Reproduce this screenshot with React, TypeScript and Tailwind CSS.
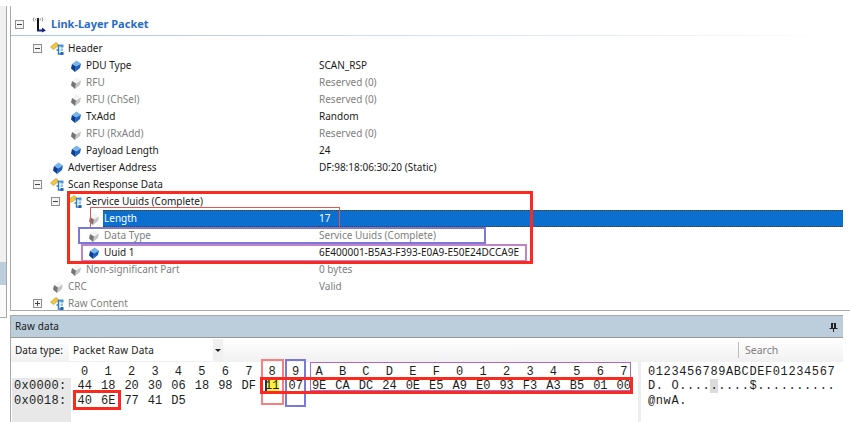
const FONT = "font-['Noto_Sans','Liberation_Sans',sans-serif]";
const MONO = "font-['Liberation_Mono','DejaVu_Sans_Mono',monospace]";

function Cube({ on = true }: { on?: boolean }) {
  const a = on ? "#79b6ec" : "#f4f4f4";
  const b = on ? "#1a62c0" : "#c4c4c4";
  const c = on ? "#0b3d94" : "#757575";
  return (
    <svg width="10" height="12" viewBox="0 0 10 12" className="shrink-0">
      <path d="M5.5 0.5 L10 3.5 L5 6.5 L1 4 Z" fill={a} />
      <path d="M10 3.5 L9 8 L4 12 L5 6.5 Z" fill={b} />
      <path d="M1 4 L5 6.5 L4 12 L0 8.5 Z" fill={c} />
    </svg>
  );
}

function Struct() {
  return (
    <svg width="15" height="14" viewBox="0 0 15 14" className="shrink-0">
      <path d="M0.5 5 L6 0.5 L9 3 L3.5 7.5 Z" fill="#f4c63a" stroke="#b98a1e" strokeWidth="0.6" />
      <path d="M11 3.5 H8.5 V8 H6.5 M8.5 8 V12 H11" fill="none" stroke="#2f7fc8" strokeWidth="1.5" />
      <rect x="10.5" y="2.5" width="3" height="3" fill="#4a94d8" />
      <rect x="10.5" y="10" width="3" height="3" fill="#1f66b0" />
      <rect x="10.5" y="6.5" width="2.5" height="2.5" fill="#8cc0ea" />
    </svg>
  );
}

function Antenna() {
  return (
    <svg width="16" height="17" viewBox="0 0 16 17" className="shrink-0">
      <path d="M3 1.5 Q1.5 3.5 3 5.5 M11 1.5 Q12.5 3.5 11 5.5 M5 2.5 Q4.2 3.5 5 4.5 M9 2.5 Q9.8 3.5 9 4.5" fill="none" stroke="#666" strokeWidth="0.8" />
      <rect x="6" y="2" width="2" height="2" fill="#222" />
      <path d="M7 4 V14" stroke="#111" strokeWidth="2" />
      <path d="M6 14.5 H12" stroke="#16267c" strokeWidth="2" />
      <path d="M11 11.5 L15 14.5 L11 16.5 Z" fill="#16267c" />
    </svg>
  );
}

function Box({ plus = false }: { plus?: boolean }) {
  return (
    <span className="flex h-[9px] w-[9px] shrink-0 items-center justify-center border border-[#8f8f8f] bg-[#f4f4f4]">
      <span className="relative block h-px w-[5px] bg-[#444]">
        {plus && <span className="absolute left-[2px] top-[-2px] block h-[5px] w-px bg-[#444]" />}
      </span>
    </span>
  );
}

type R = {
  pl: string; name: string; value?: string; kind: "on" | "off" | "struct";
  gray?: boolean; plus?: boolean; selected?: boolean;
};

const rows: R[] = [
  { pl: "pl-[22px]", name: "Header", kind: "struct" },
  { pl: "pl-[60px]", name: "PDU Type", value: "SCAN_RSP", kind: "on" },
  { pl: "pl-[60px]", name: "RFU", value: "Reserved (0)", kind: "off", gray: true },
  { pl: "pl-[60px]", name: "RFU (ChSel)", value: "Reserved (0)", kind: "off", gray: true },
  { pl: "pl-[60px]", name: "TxAdd", value: "Random", kind: "on" },
  { pl: "pl-[60px]", name: "RFU (RxAdd)", value: "Reserved (0)", kind: "off", gray: true },
  { pl: "pl-[60px]", name: "Payload Length", value: "24", kind: "on" },
  { pl: "pl-[42px]", name: "Advertiser Address", value: "DF:98:18:06:30:20 (Static)", kind: "on" },
  { pl: "pl-[22px]", name: "Scan Response Data", kind: "struct" },
  { pl: "pl-[40px]", name: "Service Uuids (Complete)", kind: "struct" },
  { pl: "pl-[78px]", name: "Length", value: "17", kind: "off", selected: true },
  { pl: "pl-[78px]", name: "Data Type", value: "Service Uuids (Complete)", kind: "off", gray: true },
  { pl: "pl-[78px]", name: "Uuid 1", value: "6E400001-B5A3-F393-E0A9-E50E24DCCA9E", kind: "on" },
  { pl: "pl-[60px]", name: "Non-significant Part", value: "0 bytes", kind: "off", gray: true },
  { pl: "pl-[42px]", name: "CRC", value: "Valid", kind: "off", gray: true },
  { pl: "pl-[22px]", name: "Raw Content", kind: "struct", gray: true, plus: true },
];

function TreeRow({ r }: { r: R }) {
  const color = r.gray ? "text-[#808080]" : "text-[#1a1a1a]";
  const isStruct = r.kind === "struct";
  return (
    <div className="grid h-[17px] grid-cols-[308px_1fr] items-center text-[10px] leading-[17px]">
      <div className={`flex h-[17px] items-center ${r.pl}`}>
        {isStruct && <Box plus={r.plus} />}
        <span className={isStruct ? "ml-[8px]" : ""}>
          {isStruct ? <Struct /> : <Cube on={r.kind === "on"} />}
        </span>
        {r.selected ? (
          <span className="ml-[4px] h-[17px] flex-1 border-y border-dotted border-[#5b3a12] bg-[#0a6fcf] pl-px leading-[15px] text-white">
            {r.name}
          </span>
        ) : (
          <span className={`${isStruct ? "ml-[3px]" : "ml-[5px]"} ${color}`}>{r.name}</span>
        )}
      </div>
      {r.selected ? (
        <div className="h-[17px] border-y border-dotted border-[#5b3a12] bg-[#0a6fcf] leading-[15px] text-white">{r.value}</div>
      ) : (
        <div className={r.gray ? "text-[#808080]" : "text-[#1a1a1a]"}>{r.value}</div>
      )}
    </div>
  );
}

const heads = "0 1 2 3 4 5 6 7 8 9 A B C D E F 0 1 2 3 4 5 6 7".split(" ");
const line1 = "44 18 20 30 06 18 98 DF 11 07 9E CA DC 24 0E E5 A9 E0 93 F3 A3 B5 01 00".split(" ");
const line2 = "40 6E 77 41 D5".split(" ");

function HexCells({ items }: { items: string[] }) {
  return (
    <div className="grid grid-cols-[repeat(24,23.45px)]">
      {items.map((t, i) =>
        t === "11" ? (
          <span key={i} className="text-center">
            <span className="bg-[#fdf33a] [box-shadow:inset_2px_0_0_#22306a]">{t}</span>
          </span>
        ) : (
          <span key={i} className="text-center">{t}</span>
        ),
      )}
    </div>
  );
}

export default function App() {
  return (
    <div className={`relative h-[422px] w-[850px] overflow-hidden bg-white ${FONT}`}>
      <div className="flex h-full">
        {/* left strip */}
        <div className="flex w-[10px] shrink-0 flex-col pt-[6px]">
          <div className="h-[256px] w-[7px] border-r border-[#a8a8a8] bg-[#f0f0f0]" />
          <div className="h-[23px] w-[7px] border-r border-[#a8a8a8] bg-[#bccddc]" />
          <div className="h-[33px] w-[7px] border-b border-r border-[#a8a8a8] bg-[#fafafa]" />
        </div>

        <div className="flex min-w-0 flex-1 flex-col pt-[6px]">
          {/* tree */}
          <div className="h-[305px] border-b border-l border-[#a8a8a8]">
            <div className="mr-[7px]">
              <div className="mt-[9px] flex h-[18px] items-center pl-[4px]">
                <Box />
                <span className="ml-[7px]"><Antenna /></span>
                <span className="ml-[4px] text-[11px] font-bold text-[#2a6cc4]">Link-Layer Packet</span>
              </div>
              <div className="mb-[4px] mt-[2px] h-px bg-gradient-to-r from-[#a9c4e4] to-white" />
              {rows.map((r) => <TreeRow key={r.name} r={r} />)}
            </div>
          </div>

          {/* raw data */}
          <div className="mr-[7px] mt-[4px] flex min-h-0 flex-1 flex-col border-l border-t border-[#a8a8a8]">
            <div className="flex h-[22px] shrink-0 items-center justify-between border-b border-[#9a9a9a] bg-[#bccddc] pl-[4px] pr-[5px] text-[10px] text-[#1a1a1a]">
              <span className="tracking-[0.1px]">Raw data</span>
              <svg width="9" height="10" viewBox="0 0 9 10">
                <path d="M2 1 H7 V6 H8.5 V7 H0.5 V6 H2 Z M4 1.5 V6 H5 V1.5 Z M4 7 H5 V10 H4 Z" fill="#222" fillRule="evenodd" />
              </svg>
            </div>

            <div className="flex h-[24px] shrink-0 items-center bg-gradient-to-b from-white to-[#f1f1f1] text-[10px] text-[#1a1a1a]">
              <span className="ml-[4px] w-[54px] shrink-0">Data type:</span>
              <div className="flex h-[22px] w-[154px] items-center justify-between bg-white pl-[4px]">
                <span className="tracking-[0.2px]">Packet Raw Data</span>
                <span className="flex h-[22px] w-[10px] items-center justify-center bg-[#f0f0f0]">
                  <span className="block h-0 w-0 border-x-[3px] border-t-[3px] border-x-transparent border-t-[#222]" />
                </span>
              </div>
              <div className="ml-[515px] h-[16px] border-l border-[#bdbdbd] pl-[6px] text-[10.5px] leading-[16px] text-[#808080]">Search</div>
            </div>

            <div className={`flex min-h-0 flex-1 text-[12px] leading-[14px] text-[#1d1d1d] ${MONO}`}>
              <div className="flex w-[60px] shrink-0 flex-col pl-[1px]">
                <div className="h-[16px] shrink-0" />
                <div className="flex-1 bg-[#e8e8e8] pl-[2px] pt-px tracking-[0.3px]">
                  <div className="h-[15px]">0x0000:</div>
                  <div>0x0018:</div>
                </div>
              </div>
              <div className="w-[567px] shrink-0 pl-[2px] pt-[3px]">
                <div className="h-[14px]"><HexCells items={heads} /></div>
                <div className="h-[14px]"><HexCells items={line1} /></div>
                <div className="mt-px h-[14px]"><HexCells items={line2} /></div>
              </div>
              <div className="flex-1 whitespace-pre border-l-[3px] border-[#eeeeee] pl-[7px] pt-[3px] tracking-[0.6px]">
                <div className="h-[14px]">0123456789ABCDEF01234567</div>
                <div className="h-[14px]">D. O....<span className="bg-[#dcdcdc]">.</span>....$..........</div>
                <div className="mt-px h-[14px]">@nwA.</div>
              </div>
            </div>
          </div>
        </div>
      </div>

      {/* annotations drawn over the capture */}
      <div className="absolute left-[90px] top-[207px] h-[21px] w-[250px] border border-[#e25656]" />
      <div className="absolute left-[78px] top-[227px] h-[17px] w-[408px] border-2 border-[#7a78d8]" />
      <div className="absolute left-[81px] top-[244px] h-[18px] w-[446px] border-2 border-[#c283c8]" />
      <div className="absolute left-[67px] top-[191px] h-[73px] w-[466px] border-[3px] border-[#fb2a1c]" />

      <div className="absolute left-[261px] top-[359px] h-[46px] w-[23px] border-2 border-[#f78080]" />
      <div className="absolute left-[285px] top-[359px] h-[48px] w-[21px] border-2 border-[#7a78d8]" />
      <div className="absolute left-[310px] top-[362px] h-[29px] w-[321px] border border-[#b765bf]" />
      <div className="absolute left-[260px] top-[377px] h-[17px] w-[373px] border-[3px] border-[#fb2a1c]" />
      <div className="absolute left-[73px] top-[390px] h-[20px] w-[48px] border-[3px] border-[#fb2a1c]" />
    </div>
  );
}
